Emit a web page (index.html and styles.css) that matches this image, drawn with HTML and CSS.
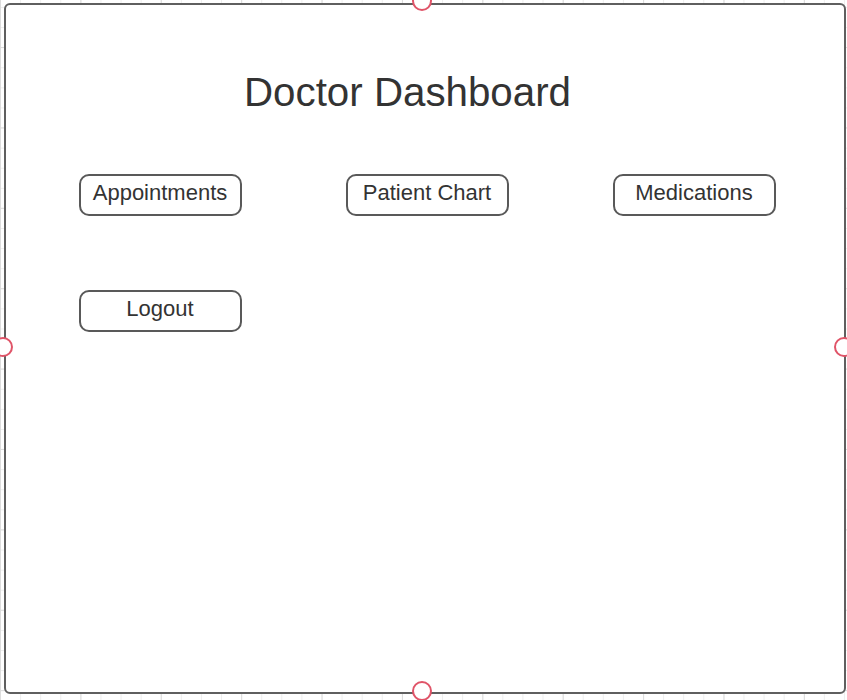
FILE: index.html
```html
<!DOCTYPE html>
<html lang="en">
<head>
<meta charset="utf-8">
<title>Doctor Dashboard</title>
<link rel="stylesheet" href="styles.css">
</head>
<body>
  <div class="canvas">
    <div class="frame">
      <h1 class="title">Doctor Dashboard</h1>
      <div class="buttons">
        <div class="btn">Appointments</div>
        <div class="btn">Patient Chart</div>
        <div class="btn">Medications</div>
        <div class="btn">Logout</div>
      </div>
      <span class="handle handle-top"></span>
      <span class="handle handle-left"></span>
      <span class="handle handle-right"></span>
      <span class="handle handle-bottom"></span>
    </div>
  </div>
</body>
</html>
```
FILE: styles.css
```css
html, body {
  margin: 0;
  padding: 0;
}
body {
  width: 847px;
  height: 700px;
  overflow: hidden;
  font-family: "Liberation Sans", Arial, sans-serif;
  color: #333333;
  background-color: #ffffff;
}
.canvas {
  width: 847px;
  height: 700px;
  padding: 3px 0 0 3.5px;
  box-sizing: border-box;
  background-image:
    linear-gradient(to right, #dcdcdc 1px, transparent 1px),
    linear-gradient(to bottom, #dcdcdc 1px, transparent 1px),
    linear-gradient(to right, #eeeeee 1px, transparent 1px),
    linear-gradient(to bottom, #eeeeee 1px, transparent 1px);
  background-size: 80.4px 80.4px, 80.4px 80.4px, 20.1px 20.1px, 20.1px 20.1px;
  background-position: 0 0, 0 47px, 0 0, 0 7px;
}
.frame {
  position: relative;
  width: 842.5px;
  height: 691px;
  box-sizing: border-box;
  border: 2.5px solid #5f5f5f;
  border-radius: 6px;
  background: #ffffff;
}
.title {
  margin: 64px 0 0 0;
  padding-left: 238.5px;
  font-size: 40.3px;
  line-height: 48px;
  font-weight: normal;
  color: #333333;
}
.buttons {
  display: grid;
  grid-template-columns: repeat(3, 163px);
  column-gap: 104px;
  row-gap: 74px;
  margin: 57px 0 0 73px;
}
.btn {
  height: 42px;
  box-sizing: border-box;
  border: 2px solid #595959;
  border-radius: 10px;
  padding-top: 4px;
  font-size: 22px;
  line-height: 25px;
  text-align: center;
  color: #333333;
  background: #ffffff;
}
.handle {
  position: absolute;
  width: 20px;
  height: 20px;
  box-sizing: border-box;
  border: 2.5px solid #e05468;
  border-radius: 50%;
  background: #ffffff;
}
.handle-top {
  left: 406.5px;
  top: -14.5px;
}
.handle-bottom {
  left: 406.5px;
  top: 675.5px;
}
.handle-left {
  left: -12.5px;
  top: 331.5px;
}
.handle-right {
  left: 828px;
  top: 331.5px;
}
```
